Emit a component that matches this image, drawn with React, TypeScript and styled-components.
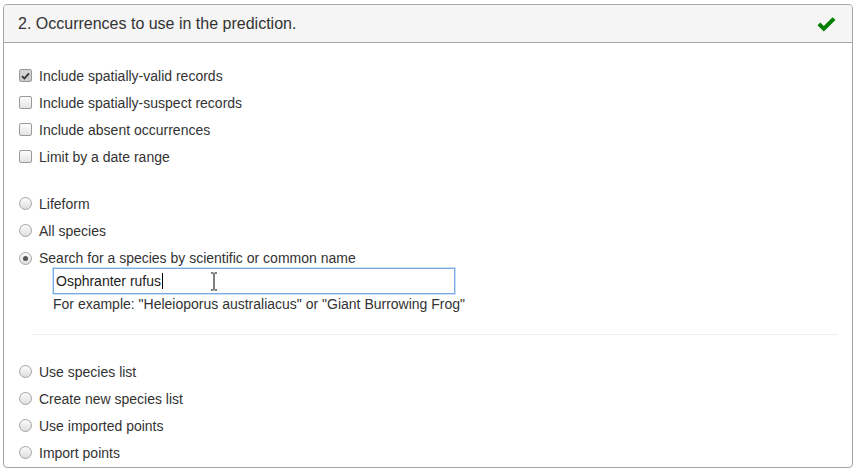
import React from "react";
import styled, { createGlobalStyle } from "styled-components";

const Global = createGlobalStyle`
  html, body { margin: 0; padding: 0; background: #fff; }
  body { font-family: "Liberation Sans", Arial, Helvetica, sans-serif; color: #333; font-size: 14px; }
`;

const Page = styled.div`
  padding: 4px 0 0 3px;
`;

const Panel = styled.section`
  width: 850px;
  height: 464px;
  box-sizing: border-box;
  border: 1px solid #a6a6a6;
  border-radius: 4px;
  overflow: hidden;
  display: flex;
  flex-direction: column;
`;

const Header = styled.header`
  height: 38px;
  flex: none;
  box-sizing: border-box;
  background: #f5f5f5;
  border-bottom: 1px solid #a6a6a6;
  display: flex;
  align-items: center;
  justify-content: space-between;
  padding: 1px 16px 0 14px;
`;

const Title = styled.h3`
  margin: 0;
  font-size: 16px;
  font-weight: normal;
  color: #333;
  line-height: 18px;
`;

const Body = styled.div`
  padding: 19px 0 2px 15px;
  display: flex;
  flex-direction: column;
`;

const Group = styled.div<{ $top?: number }>`
  display: flex;
  flex-direction: column;
  margin-top: ${(p) => p.$top ?? 0}px;
`;

const Row = styled.label<{ $h?: number; $top?: number }>`
  display: flex;
  align-items: center;
  gap: 7px;
  height: ${(p) => p.$h ?? 27}px;
  margin-top: ${(p) => p.$top ?? 0}px;
  line-height: 20px;
  font-size: 14px;
  color: #333;
`;

const Box = styled.span<{ $checked?: boolean }>`
  width: 13px;
  height: 13px;
  box-sizing: border-box;
  border: 1px solid #9a9a9a;
  border-radius: 2px;
  background: ${(p) =>
    p.$checked ? "linear-gradient(#d6d6d6, #c9c9c9)" : "linear-gradient(#fdfdfd, #e3e3e3)"};
  display: flex;
  align-items: center;
  justify-content: center;
  flex: none;
`;

const Radio = styled.span<{ $checked?: boolean }>`
  width: 13px;
  height: 13px;
  box-sizing: border-box;
  border: 1px solid #a3a3a3;
  border-radius: 50%;
  background: linear-gradient(#fbfbfb, #dedede);
  display: flex;
  align-items: center;
  justify-content: center;
  flex: none;
  &::after {
    content: "";
    display: ${(p) => (p.$checked ? "block" : "none")};
    width: 5px;
    height: 5px;
    border-radius: 50%;
    background: #555;
  }
`;

const Field = styled.div`
  position: relative;
  margin-left: 34px;
  width: 402px;
  height: 26px;
  box-sizing: border-box;
  border: 1px solid #74abe6;
  box-shadow: 0 0 0 1px rgba(140, 186, 238, 0.45);
  display: flex;
  align-items: center;
  padding-left: 2px;
  font-size: 14px;
  color: #222;
`;

const Caret = styled.span`
  display: inline-block;
  width: 1px;
  height: 16px;
  background: #000;
  margin-left: 1px;
`;

const Pointer = styled.svg`
  position: absolute;
  left: 156px;
  top: 3px;
`;

const Help = styled.div`
  margin-left: 34px;
  line-height: 20px;
  font-size: 14px;
  color: #333;
`;

const Divider = styled.hr`
  margin: 20px 14px 0 14px;
  border: 0;
  border-top: 1px solid #eeeeee;
  height: 0;
`;

const Check = () => (
  <svg width="9" height="8" viewBox="0 0 9 8">
    <path d="M1 4.2 L3.4 6.5 L8 1.3" fill="none" stroke="#333" strokeWidth="1.8" />
  </svg>
);

const OkIcon = () => (
  <svg width="19" height="15" viewBox="0 0 19 15">
    <path d="M0.5 8.2 L3.3 5.4 L6.8 8.9 L15.6 0.3 L18.5 3.1 L6.8 14.6 Z" fill="#008000" />
  </svg>
);

const checks = [
  { label: "Include spatially-valid records", checked: true },
  { label: "Include spatially-suspect records" },
  { label: "Include absent occurrences" },
  { label: "Limit by a date range" },
];

const lower = ["Use species list", "Create new species list", "Use imported points", "Import points"];

export default function App() {
  return (
    <>
      <Global />
      <Page>
        <Panel>
          <Header>
            <Title>2. Occurrences to use in the prediction.</Title>
            <OkIcon />
          </Header>
          <Body>
            <Group>
              {checks.map((c) => (
                <Row key={c.label}>
                  <Box $checked={c.checked}>{c.checked && <Check />}</Box>
                  {c.label}
                </Row>
              ))}
            </Group>
            <Group $top={20}>
              <Row>
                <Radio />
                Lifeform
              </Row>
              <Row>
                <Radio />
                All species
              </Row>
              <Row $h={20} $top={4}>
                <Radio $checked />
                Search for a species by scientific or common name
              </Row>
              <Field>
                Osphranter rufus
                <Caret />
                <Pointer width="8" height="19" viewBox="0 0 8 19">
                  <path d="M1 1 H3.5 M4.5 1 H7 M4 1.5 V17.5 M1 18 H3.5 M4.5 18 H7" stroke="#000" strokeWidth="1" fill="none" />
                </Pointer>
              </Field>
              <Help>For example: "Heleioporus australiacus" or "Giant Burrowing Frog"</Help>
            </Group>
            <Divider />
            <Group $top={23}>
              {lower.map((l) => (
                <Row key={l}>
                  <Radio />
                  {l}
                </Row>
              ))}
            </Group>
          </Body>
        </Panel>
      </Page>
    </>
  );
}
